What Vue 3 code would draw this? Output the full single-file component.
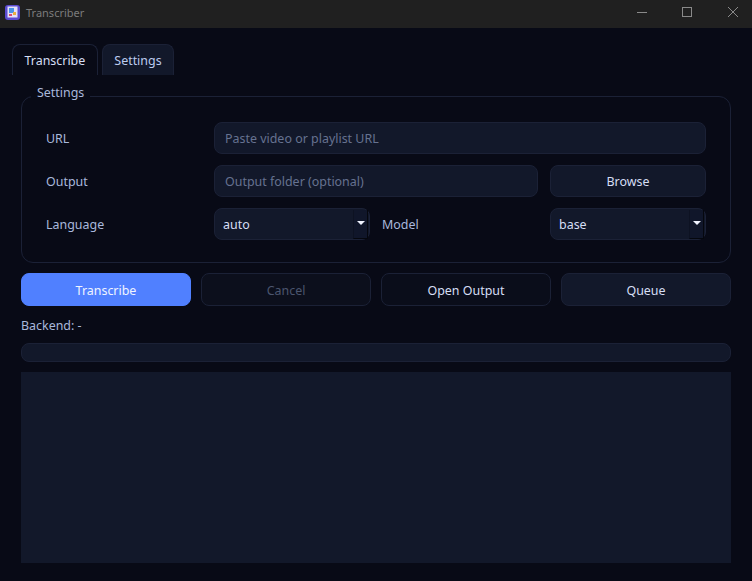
<template>
  <div class="window">
    <div class="titlebar">
      <svg class="app-icon" width="15" height="15" viewBox="0 0 15 15">
        <rect x="0" y="0" width="15" height="15" rx="3" fill="#5a4ad0" />
        <rect x="2.5" y="1.5" width="10" height="11" fill="#e4e0f8" />
        <rect x="4" y="3" width="5" height="5" fill="#4a94e8" />
        <rect x="8" y="7" width="3" height="3" fill="#e8b040" />
        <rect x="4" y="9" width="3" height="2" fill="#d84a78" />
      </svg>
      <span class="app-title">Transcriber</span>
      <div class="controls">
        <svg width="10" height="10" viewBox="0 0 10 10"><path d="M0 5.5h10" stroke="#8a8a8a" /></svg>
        <svg width="10" height="10" viewBox="0 0 10 10"><rect x="0.5" y="0.5" width="9" height="9" fill="none" stroke="#8a8a8a" /></svg>
        <svg class="close" width="10" height="10" viewBox="0 0 10 10"><path d="M0 0l10 10M10 0L0 10" stroke="#8a8a8a" /></svg>
      </div>
    </div>

    <div class="content">
      <div class="tabs">
        <div class="tab active">Transcribe</div>
        <div class="tab">Settings</div>
      </div>

      <div class="page">
        <div class="group">
          <span class="legend">Settings</span>
          <div class="form">
            <label>URL</label>
            <div class="input wide3 placeholder">Paste video or playlist URL</div>
            <label>Output</label>
            <div class="input wide2 placeholder">Output folder (optional)</div>
            <div class="btn">Browse</div>
            <label>Language</label>
            <div class="input select">
              auto
              <span class="drop"><i /></span>
            </div>
            <label class="model">Model</label>
            <div class="input select">
              base
              <span class="drop"><i /></span>
            </div>
          </div>
        </div>

        <div class="actions">
          <div class="btn primary">Transcribe</div>
          <div class="btn disabled">Cancel</div>
          <div class="btn outline">Open Output</div>
          <div class="btn">Queue</div>
        </div>

        <div class="backend">Backend: -</div>
        <div class="progress" />
        <div class="log" />
      </div>
    </div>
  </div>
</template>

<script setup>
</script>

<style>
html, body {
  margin: 0;
  background: #080a16;
}
</style>

<style scoped>
.window {
  width: 752px;
  height: 581px;
  overflow: hidden;
  background: #080a16;
  font-family: "Noto Sans", "Open Sans", sans-serif;
  font-size: 12.45px;
  color: #d6def5;
}
.titlebar {
  height: 28px;
  background: #202020;
  display: flex;
  align-items: center;
  padding-left: 5px;
}
.app-icon {
  margin-right: 6px;
  margin-top: -4px;
}
.app-title {
  font-size: 11px;
  color: #7c7c7c;
  margin-top: -3px;
}
.controls {
  margin-left: auto;
  display: flex;
  gap: 35px;
  align-items: center;
  padding-right: 14px;
  margin-top: -4px;
}
.controls svg {
  display: block;
}
.controls .close {
  margin-left: 1px;
}
.content {
  padding: 16px 21px 0;
}
.tabs {
  display: flex;
  gap: 4px;
  margin-left: -9px;
  height: 31px;
}
.tab {
  padding: 0 11.5px;
  line-height: 31px;
  border: 1px solid #1b2136;
  border-bottom: none;
  border-radius: 8px 8px 0 0;
  background: #12182a;
  color: #bccbee;
}
.tab.active {
  background: #080a16;
  color: #d6def5;
}
.page {
  padding-top: 21px;
}
.group {
  position: relative;
  height: 167px;
  box-sizing: border-box;
  padding: 25px 24px 0;
  border: 1px solid #1b2136;
  border-radius: 12px;
}
.legend {
  position: absolute;
  top: -13px;
  left: 9px;
  padding: 0 6px;
  line-height: 18px;
  background: #080a16;
  color: #a9b8dc;
}
.form {
  display: grid;
  grid-template-columns: repeat(4, 156px);
  grid-auto-rows: 32px;
  gap: 11px 12px;
}
.form label {
  align-self: center;
  padding-top: 1px;
  color: #a9b8dc;
}
.input {
  box-sizing: border-box;
  height: 32px;
  line-height: 32px;
  padding: 0 8px;
  background: #12182a;
  border: 1px solid #1b2136;
  border-radius: 8px;
  color: #d6def5;
}
.wide3 {
  grid-column: span 3;
}
.wide2 {
  grid-column: span 2;
}
.placeholder {
  padding: 0 10px;
  color: #667290;
}
.select {
  position: relative;
}
.drop {
  position: absolute;
  top: 1px;
  right: 1px;
  width: 15px;
  height: 29px;
  box-sizing: border-box;
  background: #10162a;
  border-left: 1px solid #0d1222;
  border-right: 1px solid #05070e;
  border-bottom: 1px solid #05070e;
}
.drop i {
  position: absolute;
  top: 11px;
  left: 3px;
  width: 0;
  height: 0;
  border: 4px solid transparent;
  border-top: 4px solid #f0f3ff;
  border-bottom: none;
}
.btn {
  box-sizing: border-box;
  height: 33px;
  line-height: 33px;
  text-align: center;
  background: #12182a;
  border: 1px solid #1b2136;
  border-radius: 8px;
  color: #d6def5;
}
.form .btn {
  height: 32px;
  line-height: 32px;
}
.actions {
  display: grid;
  grid-template-columns: repeat(4, 170px);
  gap: 10px;
  margin-top: 10px;
}
.btn.primary {
  background: #5080ff;
  border-color: #5080ff;
  color: #f0f4ff;
}
.btn.disabled {
  background: #0c0f1c;
  color: #4b556e;
}
.btn.outline {
  background: #0a0d1a;
}
.backend {
  margin-top: 11px;
  line-height: 18px;
  color: #a9b8dc;
}
.progress {
  margin-top: 8px;
  height: 19px;
  box-sizing: border-box;
  background: #12182a;
  border: 1px solid #1b2136;
  border-radius: 8px;
}
.log {
  margin-top: 10px;
  height: 191px;
  background: #12182a;
}
</style>
